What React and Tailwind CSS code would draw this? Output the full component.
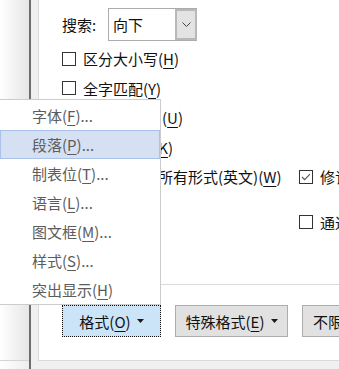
import React from 'react';

const menuItems = [
  { label: '字体', key: 'F' },
  { label: '段落', key: 'P', active: true },
  { label: '制表位', key: 'T' },
  { label: '语言', key: 'L' },
  { label: '图文框', key: 'M' },
  { label: '样式', key: 'S' },
  { label: '突出显示', key: 'H', noDots: true },
];

function Key({ k }) {
  return (
    <>
      (<span className="underline underline-offset-[3px]">{k}</span>)
    </>
  );
}

function Checkbox({ checked }) {
  return (
    <span className="flex h-[14px] w-[14px] shrink-0 items-center justify-center border border-[#333333] bg-white">
      {checked && (
        <svg width="10" height="8" viewBox="0 0 10 8">
          <polyline points="1,4 3.6,6.6 9,1.2" fill="none" stroke="#5a5a5a" strokeWidth="1.2" />
        </svg>
      )}
    </span>
  );
}

function CheckRow({ children, checked }) {
  return (
    <div className="flex h-[29.5px] items-center gap-[7px] whitespace-nowrap">
      <Checkbox checked={checked} />
      <span>{children}</span>
    </div>
  );
}

function Caret() {
  return (
    <svg width="7" height="4" viewBox="0 0 7 4" className="ml-[6px]">
      <polygon points="0,0 7,0 3.5,4" fill="#1a1a1a" />
    </svg>
  );
}

export default function App() {
  return (
    <div className="relative flex h-[369px] w-[339px] overflow-hidden bg-white font-['Noto_Sans_CJK_SC',sans-serif] text-[15px] leading-none text-[#111111]">
      {/* left strip */}
      <div className="flex w-[29px] shrink-0 flex-col">
        <div className="h-[361px] border-b border-[#d4d4d4] bg-gradient-to-r from-white to-[#e6e6e6]" />
        <div className="flex-1 bg-gradient-to-r from-white to-[#ededed]" />
      </div>
      <div className="w-[2px] shrink-0 bg-[#6d6d6d]" />

      {/* dialog */}
      <div className="flex min-w-0 flex-1 flex-col bg-[#f0f0f0] pb-[8px] pl-[7px]">
        <div className="flex flex-1 flex-col border-b border-l border-[#dadada] bg-white">
          {/* search */}
          <div className="mt-[8px] flex h-[33px] items-center pl-[23px]">
            <span className="w-[46px]">搜索:</span>
            <div className="flex h-[33px] w-[89px] border-y border-l border-[#acacac] bg-white">
              <span className="flex flex-1 items-center pl-[4px]">向下</span>
              <span className="flex h-full w-[22px] items-center justify-center border-2 border-[#b8b8b8] bg-[#e3e3e3]">
                <svg width="9" height="5" viewBox="0 0 9 5">
                  <polyline points="0.5,0.5 4.5,4.5 8.5,0.5" fill="none" stroke="#444" strokeWidth="1" />
                </svg>
              </span>
            </div>
          </div>

          {/* options */}
          <div className="mt-[3px] flex pl-[23px]">
            <div className="w-[237px] shrink-0">
              <CheckRow>区分大小写<Key k="H" /></CheckRow>
              <CheckRow>全字匹配<Key k="Y" /></CheckRow>
              <CheckRow>使用通配符<span className="ml-[4px]" /><Key k="U" /></CheckRow>
              <CheckRow>同音(英文)<Key k="K" /></CheckRow>
              <CheckRow>查找单词的所有形式(英文)<Key k="W" /></CheckRow>
            </div>
            <div className="flex shrink-0 flex-col gap-[16px] pt-[118px]">
              <CheckRow checked>修订格式(X)</CheckRow>
              <CheckRow>通过格式(T)</CheckRow>
            </div>
          </div>

          <div className="mt-[47px] border-t border-[#dcdcdc]" />

          {/* buttons */}
          <div className="mt-[20px] flex gap-[14px] pl-[23px]">
            <button className="flex h-[32px] w-[99px] shrink-0 items-center justify-center whitespace-nowrap border border-dotted border-[#111111] bg-[#cce4f7]">
              格式<Key k="O" />
              <Caret />
            </button>
            <button className="flex h-[32px] w-[113px] shrink-0 items-center justify-center whitespace-nowrap border border-[#adadad] bg-[#e1e1e1]">
              特殊格式<Key k="E" />
              <Caret />
            </button>
            <button className="flex h-[32px] w-[110px] shrink-0 items-center whitespace-nowrap border border-[#adadad] bg-[#e1e1e1] pl-[10px]">
              不限定格式<Key k="T" />
            </button>
          </div>
        </div>
      </div>

      {/* popup menu */}
      <div className="absolute left-0 top-[99px] w-[161px] border-y border-r border-[#cccccc] bg-white pt-[1px]">
        {menuItems.map((m) => (
          <div
            key={m.label}
            className={
              m.active
                ? 'flex h-[29px] items-center whitespace-nowrap border border-[#a9c3e8] bg-[#d5e1f2] pl-[31px] text-[#5c5c5c]'
                : 'flex h-[29px] items-center whitespace-nowrap border border-transparent pl-[31px] text-[#5c5c5c]'
            }
          >
            {m.label}
            <Key k={m.key} />
            {!m.noDots && '...'}
          </div>
        ))}
      </div>
    </div>
  );
}
